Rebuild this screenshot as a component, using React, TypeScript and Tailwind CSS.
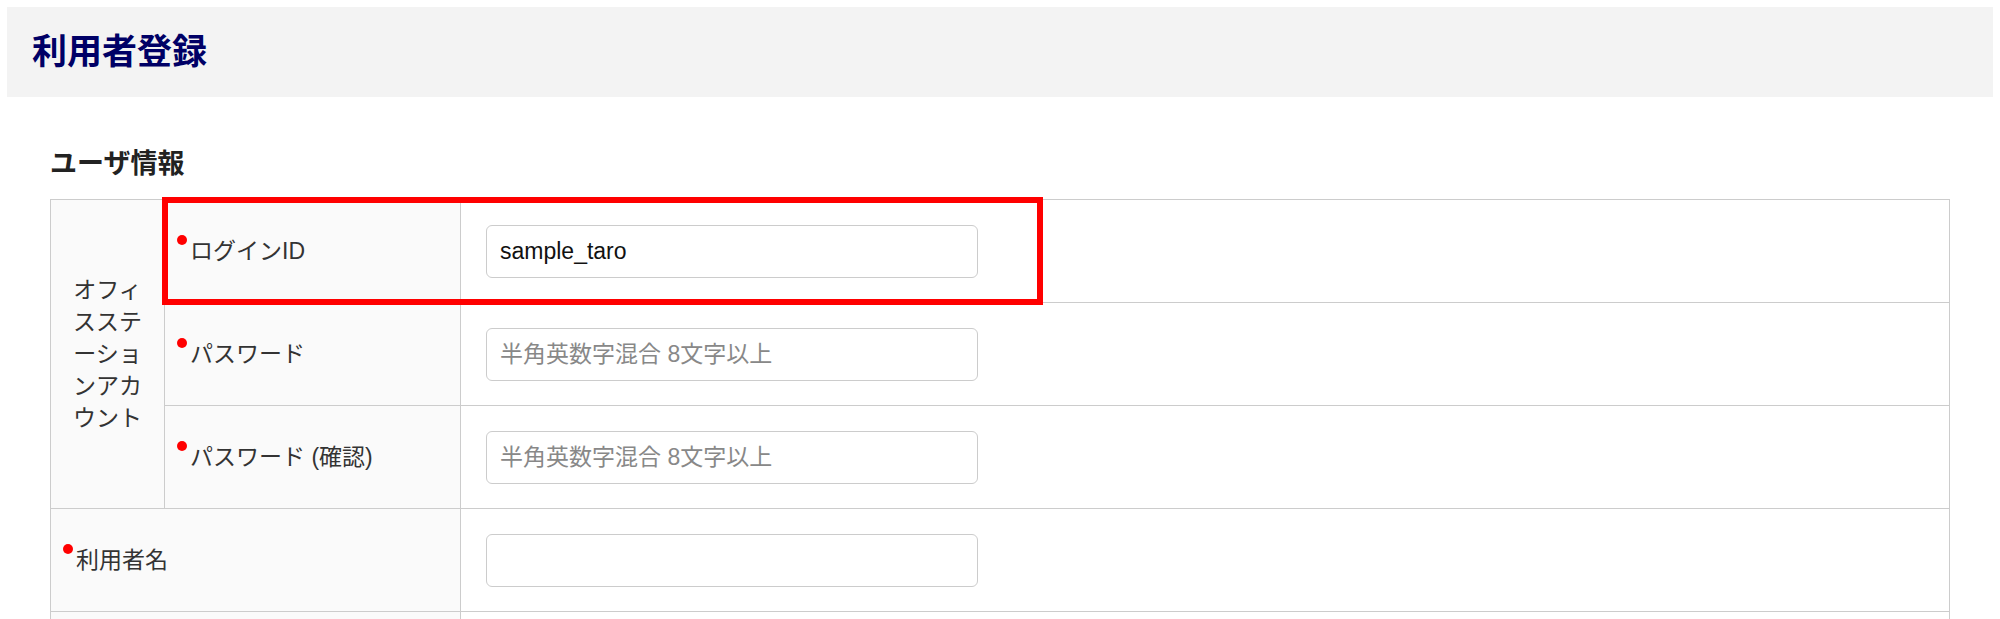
import * as React from 'react';

const FONT = "font-['Liberation_Sans','Noto_Sans_CJK_JP',sans-serif]";

function Required() {
  return <span className="mr-[3px] inline-block size-[10px] rounded-full bg-[#ff0000] align-top" />;
}

function Field({ value, placeholder }: { value?: string; placeholder?: string }) {
  return (
    <input
      type="text"
      defaultValue={value}
      placeholder={placeholder}
      className="h-[53px] w-[492px] rounded-[6px] border border-[#cccccc] bg-white px-[13px] text-[23px] text-[#111] outline-none placeholder:text-[#888]"
    />
  );
}

export default function App() {
  return (
    <div className={`${FONT} min-h-screen bg-white pb-[40px]`}>
      <div className="mx-[7px] mt-[7px] flex h-[90px] items-center bg-[#f3f3f3] pl-[25px]">
        <h1 className="text-[35px] font-bold text-[#000066]">利用者登録</h1>
      </div>

      <div className="px-[50px]">
        <h2 className="mt-[47px] mb-[15px] text-[27px] leading-[40px] font-bold text-[#222]">ユーザ情報</h2>

        <div className="relative">
          <table className="w-full table-fixed border-collapse text-[23px] text-[#333]">
            <colgroup>
              <col className="w-[114px]" />
              <col className="w-[296px]" />
              <col />
            </colgroup>
            <tbody>
              <tr>
                <td
                  rowSpan={3}
                  className="border border-[#cccccc] bg-[#fafafa] px-[14px] text-center leading-[32px]"
                >
                  オフィスステーションアカウント
                </td>
                <td className="h-[103px] border border-[#cccccc] bg-[#fafafa] pl-[12px] leading-[33px]">
                  <Required />
                  ログインID
                </td>
                <td className="border border-[#cccccc] pl-[25px]">
                  <Field value="sample_taro" />
                </td>
              </tr>
              <tr>
                <td className="h-[103px] border border-[#cccccc] bg-[#fafafa] pl-[12px] leading-[33px]">
                  <Required />
                  パスワード
                </td>
                <td className="border border-[#cccccc] pl-[25px]">
                  <Field placeholder="半角英数字混合 8文字以上" />
                </td>
              </tr>
              <tr>
                <td className="h-[103px] border border-[#cccccc] bg-[#fafafa] pl-[12px] leading-[33px]">
                  <Required />
                  パスワード (確認)
                </td>
                <td className="border border-[#cccccc] pl-[25px]">
                  <Field placeholder="半角英数字混合 8文字以上" />
                </td>
              </tr>
              <tr>
                <td
                  colSpan={2}
                  className="h-[103px] border border-[#cccccc] bg-[#fafafa] pl-[12px] leading-[33px]"
                >
                  <Required />
                  利用者名
                </td>
                <td className="border border-[#cccccc] pl-[25px]">
                  <Field />
                </td>
              </tr>
              <tr>
                <td
                  colSpan={2}
                  className="h-[103px] border border-[#cccccc] bg-[#fafafa] pl-[12px] leading-[33px]"
                >
                  <Required />
                  メールアドレス
                </td>
                <td className="border border-[#cccccc] pl-[25px]">
                  <Field />
                </td>
              </tr>
            </tbody>
          </table>

          <div className="pointer-events-none absolute top-[-2px] left-[112px] h-[108px] w-[881px] border-[6px] border-[#ff0000]" />
        </div>
      </div>
    </div>
  );
}
